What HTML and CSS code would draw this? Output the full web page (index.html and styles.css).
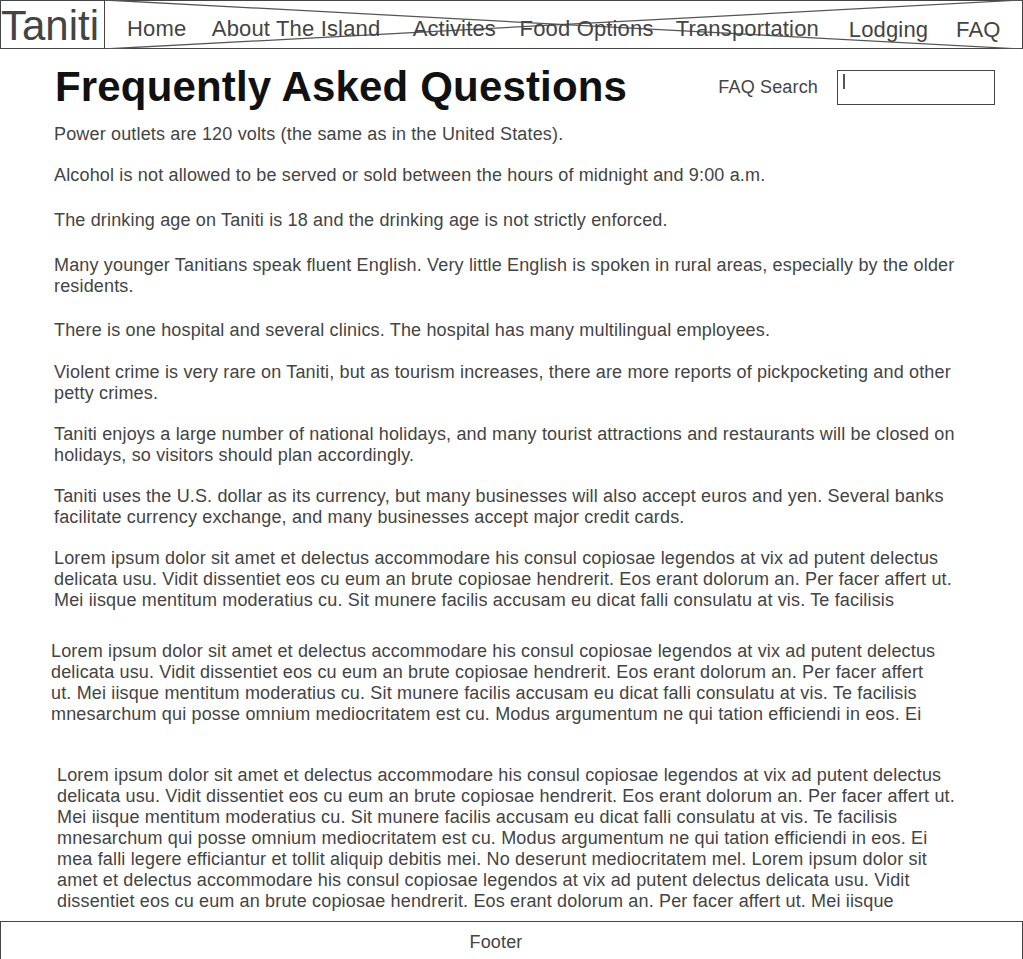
FILE: index.html
```html
<!DOCTYPE html>
<html lang="en">
<head>
<meta charset="utf-8">
<title>Taniti - FAQ</title>
<link rel="stylesheet" href="styles.css">
</head>
<body>
<header class="site-header">
  <div class="logo">Taniti</div>
  <nav class="nav">
    <svg class="nav-cross" viewBox="0 0 100 100" preserveAspectRatio="none" aria-hidden="true">
      <line x1="0" y1="0" x2="100" y2="100" vector-effect="non-scaling-stroke"></line>
      <line x1="0" y1="100" x2="100" y2="0" vector-effect="non-scaling-stroke"></line>
    </svg>
    <a class="nav-link nav-home" href="#">Home</a>
    <a class="nav-link nav-about" href="#">About The Island</a>
    <a class="nav-link nav-activities" href="#">Activites</a>
    <a class="nav-link nav-food" href="#">Food Options</a>
    <a class="nav-link nav-transport" href="#">Transportation</a>
    <a class="nav-link nav-lodging nav-low" href="#">Lodging</a>
    <a class="nav-link nav-faq nav-low" href="#">FAQ</a>
  </nav>
</header>

<main class="content">
  <div class="title-row">
    <h1 class="title">Frequently Asked Questions</h1>
    <label class="search">
      <span class="search-label">FAQ Search</span>
      <span class="search-box"><span class="caret"></span></span>
    </label>
  </div>

  <div class="faq-list">
    <p class="faq faq-1">Power outlets are 120 volts (the same as in the United States).</p>
    <p class="faq faq-2">Alcohol is not allowed to be served or sold between the hours of midnight and 9:00 a.m.</p>
    <p class="faq faq-3">The drinking age on Taniti is 18 and the drinking age is not strictly enforced.</p>
    <p class="faq faq-4">Many younger Tanitians speak fluent English. Very little English is spoken in rural areas, especially by the older residents.</p>
    <p class="faq faq-5">There is one hospital and several clinics. The hospital has many multilingual employees.</p>
    <p class="faq faq-6">Violent crime is very rare on Taniti, but as tourism increases, there are more reports of pickpocketing and other petty crimes.</p>
    <p class="faq faq-7">Taniti enjoys a large number of national holidays, and many tourist attractions and restaurants will be closed on holidays, so visitors should plan accordingly.</p>
    <p class="faq faq-8">Taniti uses the U.S. dollar as its currency, but many businesses will also accept euros and yen. Several banks facilitate currency exchange, and many businesses accept major credit cards.</p>
    <p class="faq faq-9">Lorem ipsum dolor sit amet et delectus accommodare his consul copiosae legendos at vix ad putent delectus delicata usu. Vidit dissentiet eos cu eum an brute copiosae hendrerit. Eos erant dolorum an. Per facer affert ut. Mei iisque mentitum moderatius cu. Sit munere facilis accusam eu dicat falli consulatu at vis. Te facilisis</p>
    <p class="faq faq-10">Lorem ipsum dolor sit amet et delectus accommodare his consul copiosae legendos at vix ad putent delectus delicata usu. Vidit dissentiet eos cu eum an brute copiosae hendrerit. Eos erant dolorum an. Per facer affert ut. Mei iisque mentitum moderatius cu. Sit munere facilis accusam eu dicat falli consulatu at vis. Te facilisis mnesarchum qui posse omnium mediocritatem est cu. Modus argumentum ne qui tation efficiendi in eos. Ei</p>
    <p class="faq faq-11">Lorem ipsum dolor sit amet et delectus accommodare his consul copiosae legendos at vix ad putent delectus delicata usu. Vidit dissentiet eos cu eum an brute copiosae hendrerit. Eos erant dolorum an. Per facer affert ut. Mei iisque mentitum moderatius cu. Sit munere facilis accusam eu dicat falli consulatu at vis. Te facilisis mnesarchum qui posse omnium mediocritatem est cu. Modus argumentum ne qui tation efficiendi in eos. Ei mea falli legere efficiantur et tollit aliquip debitis mei. No deserunt mediocritatem mel. Lorem ipsum dolor sit amet et delectus accommodare his consul copiosae legendos at vix ad putent delectus delicata usu. Vidit dissentiet eos cu eum an brute copiosae hendrerit. Eos erant dolorum an. Per facer affert ut. Mei iisque</p>
  </div>
</main>

<footer class="site-footer">Footer</footer>
</body>
</html>
```

FILE: styles.css
```css
* {
  box-sizing: border-box;
}

html, body {
  margin: 0;
  padding: 0;
  background: #ffffff;
}

body {
  font-family: "Liberation Sans", Arial, sans-serif;
  color: #444444;
  letter-spacing: 0.16px;
}

/* ---------- header ---------- */
.site-header {
  display: flex;
  height: 49px;
}

.logo {
  width: 105px;
  height: 49px;
  border: 1px solid #444444;
  font-size: 42px;
  line-height: 47px;
  color: #444444;
  padding-top: 1px;
  white-space: nowrap;
  letter-spacing: 0;
}

.nav {
  position: relative;
  flex: 1;
  display: flex;
  align-items: flex-start;
  height: 49px;
  border-top: 1px solid #444444;
  border-bottom: 1px solid #444444;
  border-right: 1px solid #444444;
  padding: 15px 0 0 22px;
}

.nav-cross {
  position: absolute;
  left: 0;
  top: -1px;
  width: 100%;
  height: 49px;
  pointer-events: none;
}

.nav-cross line {
  stroke: #555555;
  stroke-width: 1.3;
}

.nav-link {
  position: relative;
  font-size: 22px;
  color: #444444;
  text-decoration: none;
  white-space: nowrap;
}

.nav-low {
  margin-top: 1px;
}

.nav-about { margin-left: 25.5px; }
.nav-activities { margin-left: 32.3px; }
.nav-food { margin-left: 23.6px; }
.nav-transport { margin-left: 22.1px; }
.nav-lodging { margin-left: 29.8px; }
.nav-faq { margin-left: 27.9px; }

/* ---------- main ---------- */
.content {
  padding-top: 14px;
}

.title-row {
  display: flex;
  align-items: center;
  justify-content: space-between;
  padding: 0 28px 0 55px;
}

.title {
  margin: 0;
  font-size: 42px;
  font-weight: bold;
  line-height: 48px;
  color: #111111;
}

.search {
  display: flex;
  align-items: center;
  gap: 19px;
}

.search-label {
  font-size: 18px;
  color: #444444;
}

.search-box {
  display: block;
  width: 158px;
  height: 35px;
  border: 1px solid #444444;
  padding: 3px 5px;
}

.caret {
  display: block;
  width: 2px;
  height: 15px;
  background: #555555;
}

.faq-list {
  display: flex;
  flex-direction: column;
  gap: 20px;
  padding-top: 13px;
}

.faq {
  margin: 0 0 0 54px;
  width: 906px;
  font-size: 18px;
  line-height: 21px;
  color: #444444;
}

.faq-3 { margin-top: 4px; }
.faq-4 { margin-top: 4px; }
.faq-5 { margin-top: 3px; }
.faq-6 { margin-top: 1px; }
.faq-10 {
  margin-top: 10px;
  margin-left: 51px;
  width: 892px;
}
.faq-11 {
  margin-top: 20px;
  margin-left: 57px;
  width: 905px;
}

/* ---------- footer ---------- */
.site-footer {
  margin-top: 9px;
  height: 40px;
  border: 1px solid #444444;
  padding: 10px 31px 0 0;
  text-align: center;
  font-size: 18px;
  line-height: 21px;
  color: #444444;
}
```
